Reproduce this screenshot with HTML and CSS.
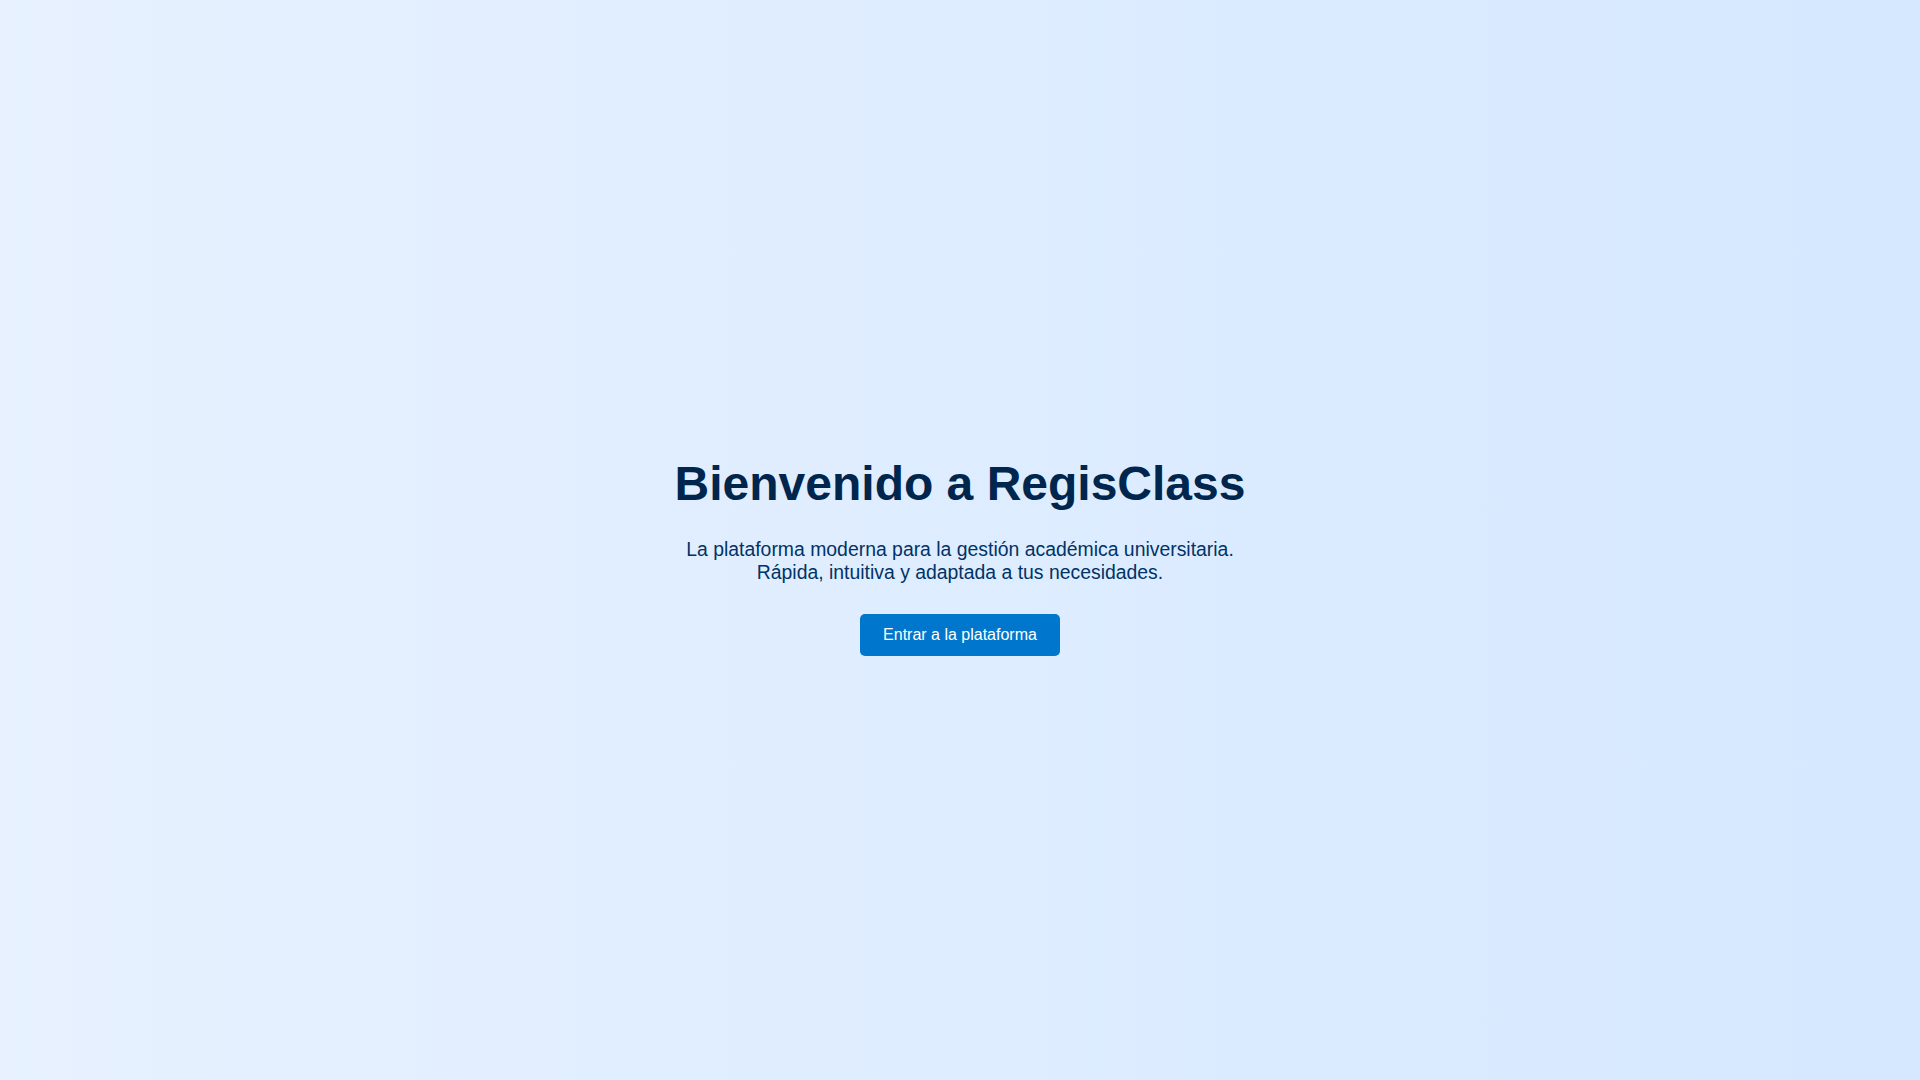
FILE: index.html
```html
<!DOCTYPE html>
<html lang="es">
<head>
<meta charset="utf-8">
<title>RegisClass</title>
<link rel="stylesheet" href="styles.css">
</head>
<body>
<main class="hero">
  <h1 class="hero-title">Bienvenido a RegisClass</h1>
  <p class="hero-text">La plataforma moderna para la gestión académica universitaria.<br>Rápida, intuitiva y adaptada a tus necesidades.</p>
  <a class="hero-button" href="#">Entrar a la plataforma</a>
</main>
</body>
</html>
```

FILE: styles.css
```css
html, body {
  margin: 0;
  padding: 0;
  height: 100%;
}

body {
  font-family: "Liberation Sans", Arial, sans-serif;
  background: linear-gradient(to right, #e7f1ff 0%, #d5e8ff 100%);
}

.hero {
  height: 100vh;
  display: flex;
  flex-direction: column;
  align-items: center;
  justify-content: center;
  text-align: center;
  padding-top: 1px;
  box-sizing: border-box;
}

.hero-title {
  font-size: 48px;
  font-weight: bold;
  color: #00264d;
  margin: 31px 0 27px;
}

.hero-text {
  font-size: 19.4px;
  color: #003366;
  margin: 0 0 30px;
}

.hero-button {
  display: inline-block;
  background: #0077cc;
  color: #ffffff;
  font-size: 16px;
  padding: 12px 23px;
  border-radius: 5px;
  text-decoration: none;
}
```
